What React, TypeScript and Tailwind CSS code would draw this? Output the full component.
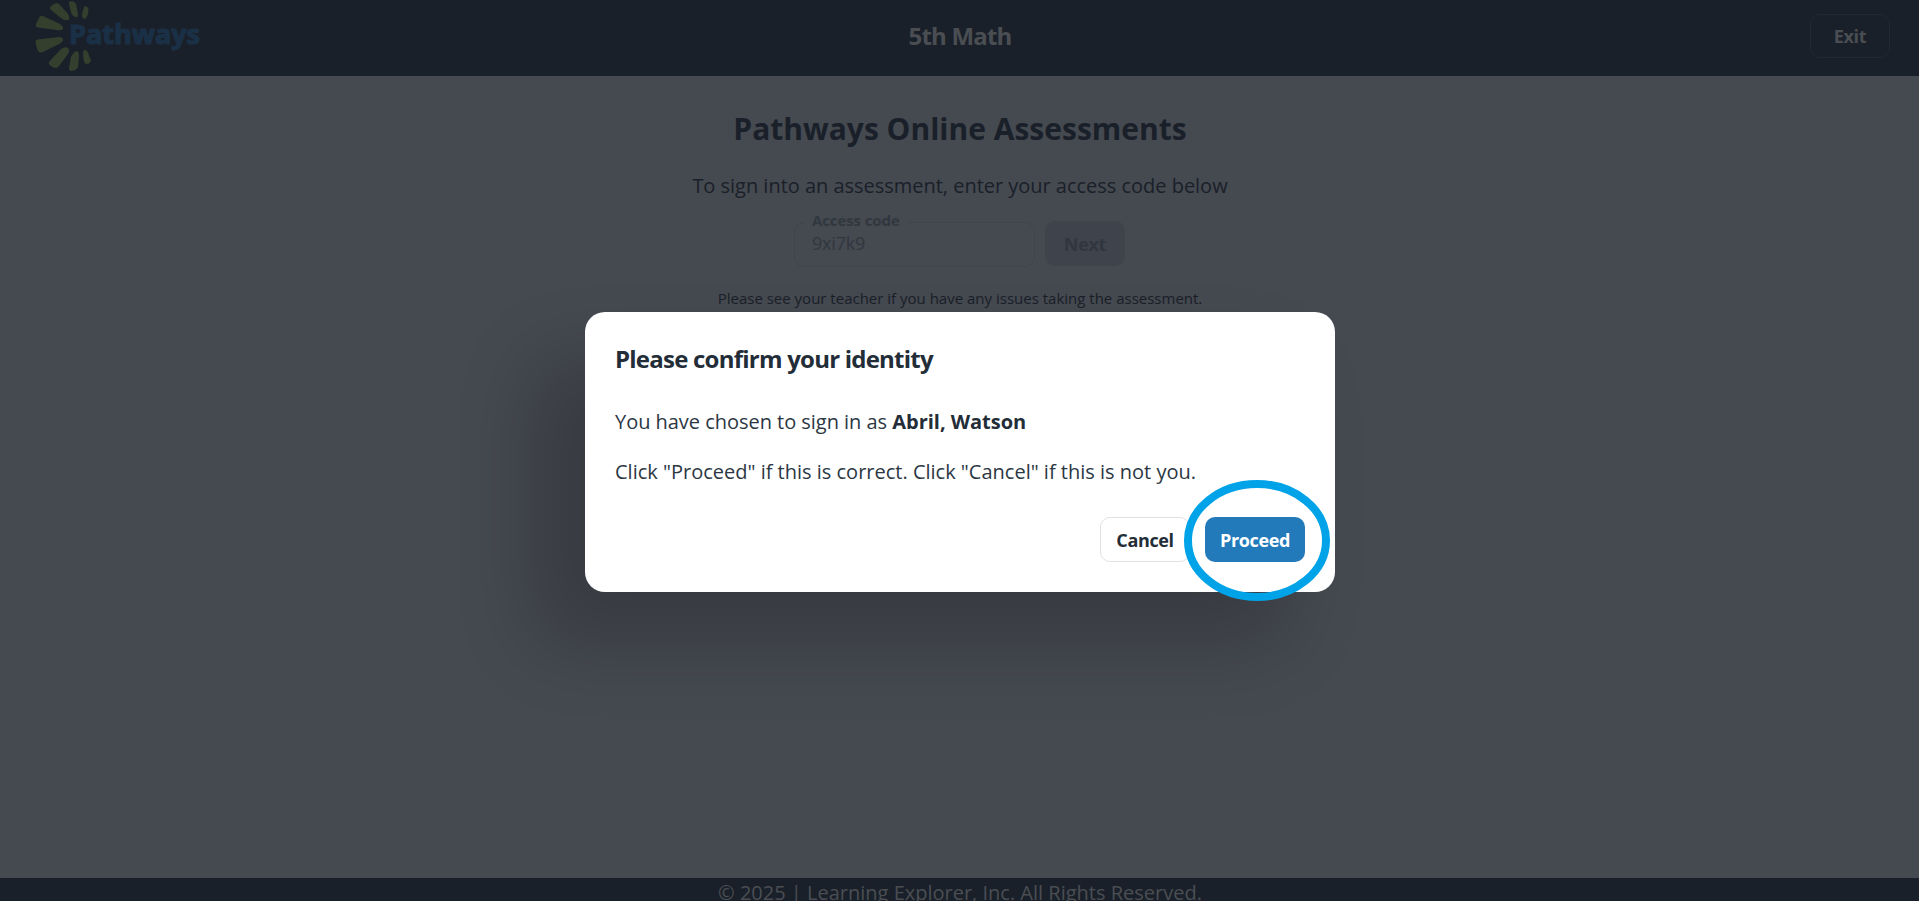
interface DialogProps {
  studentName: string;
}

function Logo() {
  return (
    <svg width="210" height="76" viewBox="0 0 210 76" className="block">
      <g fill="#343f2e">
        <path d="M51 6Q55 2 59 4L68 14Q71 20 67 20Q65 21 61 18L51 10Q49 8 51 6Z" />
        <path d="M69 2Q74 0 76 4L78 14Q78 18 75 17Q72 16 71 12L69 4Z" />
        <path d="M84 7Q87 5 88.500 9L88 14Q86 19 84 19Q82 18 82 14Z" />
        <path d="M39 18Q40 15 43 16L60 24Q64 27 63 29Q61 31 57 30L38 27.500Q35 27 36 24Z" />
        <path d="M35.500 42Q35 40 38 39.500L59 37Q63 37 63 40Q63 42 59 44L43 52Q39 54 37 49Z" />
        <path d="M49 62L60 50Q64 46 68 48Q70 50 68 54L59 66Q56 70 51 66Q48 64 49 62Z" />
        <path d="M69 68L71 57Q74 51 77 51Q79 52 79 56L78 67Q76 71 71 71Q69 71 69 68Z" />
        <path d="M83 53Q83 50 85.500 50Q88 51 89 56L91 60Q90 64 87 64Q84 64 83.500 59Z" />
      </g>
      <text
        x="69"
        y="44"
        textLength="131"
        lengthAdjust="spacingAndGlyphs"
        fill="#1a3046"
        stroke="#1a3046"
        strokeWidth="1.2"
        strokeLinejoin="round"
        fontFamily="'Open Sans', sans-serif"
        fontSize="26"
        fontWeight="700"
      >
        Pathways
      </text>
    </svg>
  );
}

function Header() {
  return (
    <header className="grid h-[76px] shrink-0 grid-cols-3 items-center bg-[#1a2029]">
      <Logo />
      <h1 className="pb-1 pl-px text-center text-2xl font-bold tracking-[-0.8px] text-[#4a4e53]">5th Math</h1>
      <div className="flex justify-end pr-[29px] pb-1">
        <button className="h-11 w-20 rounded-[10px] border border-[#222831] text-lg font-bold tracking-[-0.3px] text-[#4a4e53]">Exit</button>
      </div>
    </header>
  );
}

function AccessForm() {
  return (
    <main className="flex flex-1 flex-col items-center text-[#1a2029]">
      <h2 className="mt-8 pl-px text-3xl leading-[42px] font-bold">Pathways Online Assessments</h2>
      <p className="mt-[21px] pl-px text-xl leading-[30px] tracking-[-0.02px]">To sign into an assessment, enter your access code below</p>
      <form className="mt-[11px] flex h-[62px] gap-2.5">
        <fieldset className="h-[55px] w-[241px] rounded-[10px] border border-[#40444c] px-2.5 text-[#31373f]">
          <legend className="px-[7px] pb-1 text-[15px] leading-4 font-bold tracking-[-0.1px]">Access code</legend>
          <input readOnly value="9xi7k9" className="-mt-[3px] block h-7 w-full bg-transparent px-[7px] text-lg tracking-[-0.2px] outline-none" />
        </fieldset>
        <button type="button" className="mt-[9px] h-[45px] w-20 rounded-[10px] bg-[#3f434c] text-lg font-bold tracking-[-0.3px] text-[#31373f]">
          Next
        </button>
      </form>
      <p className="mt-3 pl-px text-[15px] leading-6">Please see your teacher if you have any issues taking the assessment.</p>
    </main>
  );
}

function IdentityDialog({ studentName }: DialogProps) {
  return (
    <div className="absolute top-[312px] left-[585px] flex h-[280px] w-[750px] flex-col rounded-[20px] bg-white p-[30px] text-xl text-[#2b3743] shadow-[-50px_50px_80px_rgba(0,0,0,0.2)]">
      <h2 className="-mt-px text-2xl leading-9 font-bold tracking-[-0.77px] text-[#232d38]">Please confirm your identity</h2>
      <p className="mt-[30px] leading-[30px] tracking-[-0.03px]">
        You have chosen to sign in as <strong className="font-bold text-[#232d38]">{studentName}</strong>
      </p>
      <p className="mt-5 leading-[30px]">Click "Proceed" if this is correct. Click "Cancel" if this is not you.</p>
      <div className="mt-auto flex justify-end gap-[15px] text-lg font-bold tracking-[-0.35px] text-[#232d38]">
        <button className="h-[45px] w-[90px] rounded-[10px] border border-[#dfe1e5]">Cancel</button>
        <button className="h-[45px] w-[100px] rounded-[10px] bg-[#227abb] text-white">Proceed</button>
      </div>
      <svg width="146" height="122" viewBox="0 0 146 122" className="pointer-events-none absolute top-[168px] left-[599px]">
        <ellipse cx="73" cy="60.500" rx="69" ry="56.500" fill="none" stroke="#00a2e8" strokeWidth="8" />
      </svg>
    </div>
  );
}

export default function App() {
  return (
    <div className="relative flex h-[901px] w-full flex-col overflow-hidden bg-[#454950] font-['Open_Sans',sans-serif]">
      <Header />
      <AccessForm />
      <footer className="h-[23px] shrink-0 overflow-hidden bg-[#1a2029] pl-px text-center text-xl leading-[30px] text-[#4a4e53]">
        © 2025 | Learning Explorer, Inc. All Rights Reserved.
      </footer>
      <IdentityDialog studentName="Abril, Watson" />
    </div>
  );
}
